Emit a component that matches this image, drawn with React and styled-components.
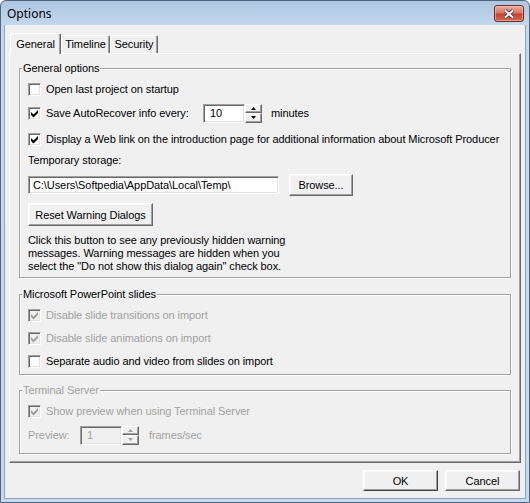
import React from "react";
import styled, { createGlobalStyle } from "styled-components";

const GlobalStyle = createGlobalStyle`
  body {
    margin: 0;
    background: #ffffff;
  }

  * {
    box-sizing: border-box;
  }
`;

const UI_FONT = `"Liberation Sans", Arial, sans-serif`;

const Window = styled.div`
  width: 530px;
  height: 503px;
  display: flex;
  flex-direction: column;
  padding: 0 3px 3px 3px;
  background: linear-gradient(#adc5e1, #c3d8ee 24px, #c5daf0);
  border: 1px solid #54657a;
  border-radius: 6px 6px 0 0;
  font-family: ${UI_FONT};
  font-size: 11px;
  letter-spacing: -0.08px;
  color: #000;
`;

const TitleBar = styled.div`
  height: 24px;
  display: flex;
  align-items: flex-start;
  justify-content: space-between;
  padding-left: 3px;
`;

const Title = styled.div`
  font-family: "Noto Sans", "Open Sans", sans-serif;
  font-size: 12px;
  letter-spacing: 0;
  line-height: 24px;
  margin-top: 1px;
`;

const CloseButton = styled.div`
  width: 30px;
  height: 17px;
  margin: 4px 2px 0 0;
  display: flex;
  align-items: center;
  justify-content: center;
  border: 1px solid #6b2a22;
  border-radius: 3px;
  background: linear-gradient(#e8aa9c, #d7786a 45%, #c2442f 55%, #cf6a55);
  box-shadow: inset 0 0 0 1px rgba(255, 210, 200, 0.5);
`;

const Client = styled.div`
  flex: 1;
  display: flex;
  flex-direction: column;
  padding: 8px 4px 0 4px;
  background: #f0f0f0;
  border: 1px solid #8da2bb;
  border-top: none;
`;

const TabRow = styled.div`
  height: 20px;
  display: flex;
  align-items: flex-end;
  padding-left: 1px;
`;

const Tab = styled.div`
  position: relative;
  z-index: ${(p) => (p.$active ? 2 : 1)};
  width: ${(p) => p.$w}px;
  height: ${(p) => (p.$active ? 21 : 18)}px;
  margin-bottom: ${(p) => (p.$active ? -1 : 0)}px;
  padding-top: ${(p) => (p.$active ? 3 : 1)}px;
  text-align: center;
  line-height: 14px;
  background: #f0f0f0;
  border-top: 1px solid #ffffff;
  border-left: 1px solid #ffffff;
  border-right: 1px solid #696969;
  border-radius: 2px 2px 0 0;
  box-shadow: inset -1px 0 0 #a0a0a0;
`;

const Panel = styled.div`
  height: 410px;
  width: 512px;
  display: flex;
  flex-direction: column;
  padding: 14px 9px 0 9px;
  border: 1px solid;
  border-color: #ffffff #696969 #696969 #ffffff;
  box-shadow: inset -1px -1px 0 #a0a0a0;
`;

const GroupBox = styled.div`
  position: relative;
  display: flex;
  flex-direction: column;
  margin-top: ${(p) => p.$mt || 0}px;
  padding: ${(p) => p.$pad};
  border: 1px solid #a0a0a0;
  box-shadow: inset 1px 1px 0 #ffffff, 1px 1px 0 #ffffff;
`;

const Legend = styled.div`
  position: absolute;
  top: -7px;
  left: 2px;
  padding: 0 1px;
  line-height: 13px;
  background: #f0f0f0;
  color: ${(p) => (p.$disabled ? "#a0a0a0" : "#000")};
`;

const Row = styled.div`
  display: flex;
  align-items: center;
  height: ${(p) => p.$h || 16}px;
  margin-top: ${(p) => p.$mt || 0}px;
  color: ${(p) => (p.$disabled ? "#a0a0a0" : "#000")};
  white-space: nowrap;
`;

const Box = styled.span`
  width: 13px;
  height: 13px;
  flex: none;
  margin-right: 5px;
  border: 1px solid;
  border-color: #a0a0a0 #ffffff #ffffff #a0a0a0;
  box-shadow: inset 1px 1px 0 #696969, inset -1px -1px 0 #e3e3e3;
  background: ${(p) => (p.$disabled ? "#f0f0f0" : "#ffffff")};
  position: relative;

  svg {
    position: absolute;
    left: -1px;
    top: -1px;
  }
`;

const Tick = ({ disabled }) => (
  <svg width="13" height="13" viewBox="0 0 13 13">
    <path
      d="M3 5 L5.5 7.5 L10 3 L10 6 L5.5 10.5 L3 8 Z"
      fill={disabled ? "#a0a0a0" : "#000"}
    />
  </svg>
);

const Checkbox = ({ checked, disabled, children }) => (
  <Row $disabled={disabled}>
    <Box $disabled={disabled}>{checked && <Tick disabled={disabled} />}</Box>
    {children}
  </Row>
);

const FieldLabel = styled.span`
  width: ${(p) => p.$w}px;
  flex: none;
`;

const Sunken = styled.div`
  height: ${(p) => p.$h || 19}px;
  width: ${(p) => p.$w}px;
  flex: none;
  display: flex;
  align-items: center;
  padding-left: ${(p) => p.$pl || 5}px;
  border: 1px solid;
  border-color: #a0a0a0 #ffffff #ffffff #a0a0a0;
  box-shadow: inset 1px 1px 0 #696969, inset -1px -1px 0 #e3e3e3;
  background: ${(p) => (p.$disabled ? "#f0f0f0" : "#ffffff")};
  color: ${(p) => (p.$disabled ? "#a0a0a0" : "#000")};
`;

const SpinButtons = styled.div`
  width: 17px;
  height: 19px;
  flex: none;
  display: flex;
  flex-direction: column;
`;

const SpinHalf = styled.div`
  flex: 1;
  display: flex;
  align-items: center;
  justify-content: center;
  background: #f0f0f0;
  border: 1px solid;
  border-color: #ffffff #696969 #696969 #ffffff;
  box-shadow: inset -1px -1px 0 #a0a0a0;
`;

const Arrow = ({ up, disabled }) => (
  <svg width="5" height="3" viewBox="0 0 5 3">
    <path
      d={up ? "M0 3 L2.5 0 L5 3 Z" : "M0 0 L2.5 3 L5 0 Z"}
      fill={disabled ? "#a0a0a0" : "#000"}
    />
  </svg>
);

const Spin = ({ value, disabled }) => (
  <>
    <Sunken $w={42} $pl={6} $disabled={disabled}>
      {value}
    </Sunken>
    <SpinButtons>
      <SpinHalf>
        <Arrow up disabled={disabled} />
      </SpinHalf>
      <SpinHalf>
        <Arrow disabled={disabled} />
      </SpinHalf>
    </SpinButtons>
  </>
);

const Unit = styled.span`
  margin-left: ${(p) => p.$ml}px;
`;

const Button = styled.div`
  width: ${(p) => p.$w}px;
  height: ${(p) => p.$h}px;
  margin-left: ${(p) => p.$ml || 0}px;
  margin-top: ${(p) => p.$mt || 0}px;
  flex: none;
  display: flex;
  align-items: center;
  justify-content: center;
  background: #f0f0f0;
  border: 1px solid;
  border-color: #ffffff ${(p) => (p.$default ? "#404040" : "#696969")}
    ${(p) => (p.$default ? "#404040" : "#696969")} #ffffff;
  box-shadow: inset -1px -1px 0 #a0a0a0, inset 1px 1px 0 #f8f8f8;
`;

const Note = styled.div`
  margin-top: 8px;
  line-height: 13px;
`;

const Footer = styled.div`
  display: flex;
  justify-content: flex-end;
  gap: 7px;
  margin-top: 7px;
  padding-right: 1px;
`;

const App = () => (
  <>
    <GlobalStyle />
    <Window>
      <TitleBar>
        <Title>Options</Title>
        <CloseButton>
          <svg width="12" height="10" viewBox="0 0 12 10">
            <path d="M2 1.5 L10 8.5 M10 1.5 L2 8.5" stroke="#4a2a26" strokeWidth="3.6" />
            <path d="M2 1.5 L10 8.5 M10 1.5 L2 8.5" stroke="#ffffff" strokeWidth="2" />
          </svg>
        </CloseButton>
      </TitleBar>

      <Client>
        <TabRow>
          <Tab $active $w={51}>General</Tab>
          <Tab $w={49}>Timeline</Tab>
          <Tab $w={48}>Security</Tab>
        </TabRow>

        <Panel>
          <GroupBox $pad="12px 8px 4px 8px">
            <Legend>General options</Legend>
            <Checkbox>Open last project on startup</Checkbox>
            <Row $h={20} $mt={6}>
              <Box>
                <Tick />
              </Box>
              <FieldLabel $w={157}>Save AutoRecover info every:</FieldLabel>
              <Spin value="10" />
              <Unit $ml={9}>minutes</Unit>
            </Row>
            <Row $mt={8}>
              <Checkbox checked>
                Display a Web link on the introduction page for additional information
                about Microsoft Producer
              </Checkbox>
            </Row>
            <Row $h={14} $mt={6}>
              Temporary storage:
            </Row>
            <Row $h={22} $mt={7}>
              <Sunken $w={251} $h={18} $pl={4}>
                C:\Users\Softpedia\AppData\Local\Temp\
              </Sunken>
              <Button $w={64} $h={22} $ml={10}>
                Browse...
              </Button>
            </Row>
            <Button $w={125} $h={23} $mt={7}>
              Reset Warning Dialogs
            </Button>
            <Note>
              Click this button to see any previously hidden warning
              <br />
              messages. Warning messages are hidden when you
              <br />
              select the "Do not show this dialog again" check box.
            </Note>
          </GroupBox>

          <GroupBox $mt={16} $pad="12px 8px 5px 8px">
            <Legend>Microsoft PowerPoint slides</Legend>
            <Checkbox checked disabled>
              Disable slide transitions on import
            </Checkbox>
            <Row $mt={7}>
              <Checkbox checked disabled>
                Disable slide animations on import
              </Checkbox>
            </Row>
            <Row $mt={7}>
              <Checkbox>Separate audio and video from slides on import</Checkbox>
            </Row>
          </GroupBox>

          <GroupBox $mt={15} $pad="12px 8px 8px 8px">
            <Legend $disabled>Terminal Server</Legend>
            <Checkbox checked disabled>
              Show preview when using Terminal Server
            </Checkbox>
            <Row $h={20} $mt={6} $disabled>
              <FieldLabel $w={52}>Preview:</FieldLabel>
              <Spin value="1" disabled />
              <Unit $ml={10}>frames/sec</Unit>
            </Row>
          </GroupBox>
        </Panel>

        <Footer>
          <Button $w={75} $h={21} $default>
            OK
          </Button>
          <Button $w={75} $h={21}>
            Cancel
          </Button>
        </Footer>
      </Client>
    </Window>
  </>
);

export default App;
